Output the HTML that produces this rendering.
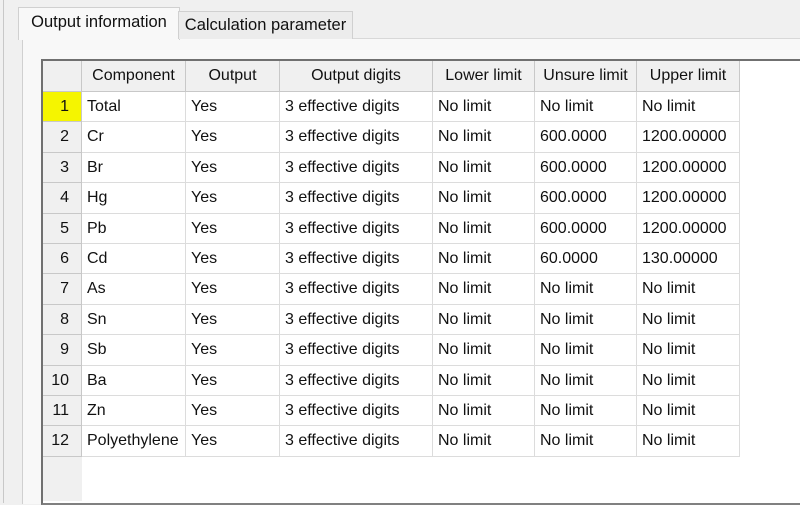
<!DOCTYPE html><html><head><style>
body{margin:0;width:800px;height:503px;background:#f0f0f0;position:relative;overflow:hidden;font-family:"Liberation Sans",sans-serif;font-size:16px;color:#111}
.a{position:absolute}
.c{position:absolute;box-sizing:border-box;border-right:1px solid #dcdcdc;border-bottom:1px solid #dcdcdc;padding-left:5px;line-height:29px;white-space:nowrap;background:#fff;overflow:hidden}
.h{background:#f0f0f0;border-right:1px solid #c8c8c8;border-bottom:1px solid #c8c8c8;text-align:center;padding:0}
.r{background:#f0f0f0;border-right:1px solid #c8c8c8;border-bottom:1px solid #c8c8c8;text-align:right;padding-right:12px;padding-left:0}
</style></head><body>
<div class="a" style="left:3px;top:0;width:1px;height:503px;background:#c8c8c8"></div>
<div class="a" style="left:22px;top:38px;width:778px;height:465px;background:#f8f8f8;border-left:1px solid #d0d0d0;border-top:1px solid #d8d8d8"></div>
<div class="a" style="left:18px;top:7px;width:160px;height:32px;background:#f8f8f8;border:1px solid #d0d0d0;border-bottom:none;font-size:16.5px;line-height:28px;text-align:center;white-space:nowrap">Output information</div>
<div class="a" style="left:178px;top:11px;width:173px;height:27px;background:#ececec;border:1px solid #d0d0d0;border-bottom:none;font-size:16.5px;line-height:27px;text-align:center;white-space:nowrap">Calculation parameter</div>
<div class="a" style="left:41px;top:59px;width:759px;height:442px;background:#fff;border-left:2px solid #707070;border-top:2px solid #707070;border-bottom:2px solid #808080"></div>
<div class="a" style="left:43px;top:61px;width:39px;height:440px;background:#f0f0f0"></div>
<div id="g"></div>
<script>
var cols=[43,82,186,280,433,535,637,740];
var hd=["","Component","Output","Output digits","Lower limit","Unsure limit","Upper limit"];
var names=["Total","Cr","Br","Hg","Pb","Cd","As","Sn","Sb","Ba","Zn","Polyethylene"];
var un=["No limit","600.0000","600.0000","600.0000","600.0000","60.0000","No limit","No limit","No limit","No limit","No limit","No limit"];
var up=["No limit","1200.00000","1200.00000","1200.00000","1200.00000","130.00000","No limit","No limit","No limit","No limit","No limit","No limit"];
var h="";
function cell(i,y,hh,t,cls){h+='<div class="c '+cls+'" style="left:'+cols[i]+'px;top:'+y+'px;width:'+(cols[i+1]-cols[i])+'px;height:'+hh+'px">'+t+'</div>';}
for(var i=0;i<7;i++)cell(i,61,31,hd[i],"h");
for(var r=0;r<12;r++){var y=92+r*30.4;
var rc=[r+1,names[r],"Yes","3 effective digits","No limit",un[r],up[r]];
for(var i=0;i<7;i++)cell(i,y,30.4,rc[i],i==0?"r":"");}
document.getElementById("g").innerHTML=h;
document.querySelector('.r').style.background="#f5f500";
</script>
</body></html>
